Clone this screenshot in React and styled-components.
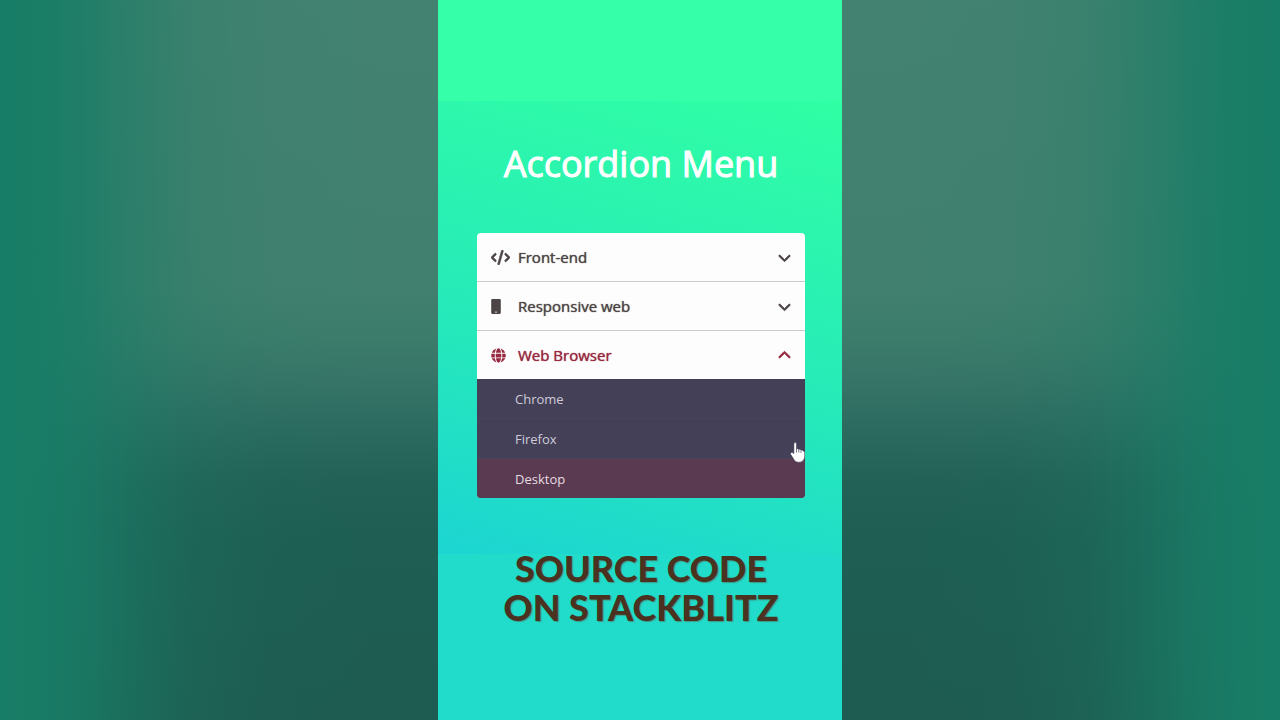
import { useState } from 'react';
import styled, { createGlobalStyle } from 'styled-components';
import { FaGlobe, FaMobile } from 'react-icons/fa';
import { FaChevronDown, FaCode } from 'react-icons/fa6';

const GlobalStyle = createGlobalStyle`
  * {
    box-sizing: border-box;
  }

  body {
    margin: 0;
    font-family: 'Open Sans', 'Noto Sans', sans-serif;
  }
`;

const Page = styled.div`
  min-height: 100vh;
  display: flex;
  justify-content: center;
  background: linear-gradient(
      90deg,
      #187d66 0%,
      rgba(24, 125, 102, 0.96) 3%,
      rgba(24, 125, 102, 0.78) 7%,
      rgba(24, 125, 102, 0.53) 10%,
      rgba(24, 125, 102, 0.22) 15%,
      rgba(24, 125, 102, 0.06) 21%,
      rgba(24, 125, 102, 0) 30%,
      rgba(24, 125, 102, 0) 70%,
      rgba(24, 125, 102, 0.06) 79%,
      rgba(24, 125, 102, 0.22) 85%,
      rgba(24, 125, 102, 0.53) 90%,
      rgba(24, 125, 102, 0.78) 93%,
      rgba(24, 125, 102, 0.96) 97%,
      #187d66 100%
    ),
    linear-gradient(
      #438270 0%,
      #41806e 40%,
      #3c7c6b 47%,
      #367467 53%,
      #2b6a5f 60%,
      #226156 67%,
      #1e5e53 75%,
      #1e5b50 100%
    );
`;

const Screen = styled.main`
  width: 404px;
  max-width: 100%;
  padding: 140px 37px 88px 39px;
  background: linear-gradient(195deg, #30ffa4 0%, #26eab9 55%, #1cd5d2 100%)
      no-repeat 0 101px / 100% 453px,
    linear-gradient(#36ffa9 101px, #22dccb 101px);
`;

const Title = styled.h1`
  margin: 0 0 45px;
  font-size: 36px;
  line-height: 48px;
  font-weight: 400;
  text-align: center;
  color: white;
  -webkit-text-stroke: 1px white;
`;

const Menu = styled.ul`
  margin: 0 0 51px;
  padding: 0;
  list-style: none;
  border-radius: 4px;
  overflow: hidden;
  background: #fdfdfd;
`;

const Item = styled.li`
  & + & {
    border-top: 1px solid #ccc;
  }
`;

const Toggle = styled.button`
  width: 100%;
  height: 48px;
  padding: 0 14px;
  border: 0;
  display: flex;
  align-items: center;
  background: none;
  color: ${({ $open }) => ($open ? '#96283f' : '#4d4545')};
  font: inherit;
  font-size: 15px;
  text-align: left;
  cursor: pointer;
`;

const IconSlot = styled.span`
  width: 27px;
  display: flex;

  svg {
    width: ${({ $width }) => $width}px;
    height: 15px;
    stroke: currentColor;
    stroke-width: ${({ $stroke }) => $stroke};
  }
`;

const Label = styled.span`
  flex: 1;
  text-shadow: 0 0 1px currentColor;
`;

const Chevron = styled(FaChevronDown)`
  font-size: 13px;
  stroke: currentColor;
  stroke-width: 30;
  transform: ${({ $open }) => ($open ? 'rotate(180deg)' : 'none')};
`;

const Submenu = styled.ul`
  margin: 0;
  padding: 0;
  list-style: none;
  background: #444057;
`;

const SubmenuItem = styled.li`
  position: relative;

  & + & {
    border-top: 1px solid #4a435b;
  }
`;

const SubmenuLink = styled.a`
  height: 39px;
  padding-left: 38px;
  display: flex;
  align-items: center;
  background: ${({ $active }) => ($active ? '#5a3a50' : 'none')};
  color: ${({ $active }) => ($active ? '#e6dbe3' : '#cfcbdb')};
  font-size: 13px;
  text-decoration: none;
`;

const Pointer = styled.svg`
  position: absolute;
  right: 0;
  bottom: -5px;
  z-index: 1;
`;

const Caption = styled.p`
  margin: 0;
  font-family: Lato, sans-serif;
  font-size: 36px;
  line-height: 39px;
  font-weight: 900;
  text-align: center;
  text-transform: uppercase;
  white-space: pre-line;
  color: #4a3120;
  text-shadow: 1px 1px 1px rgba(90, 90, 70, 0.5);
`;

const sections = [
  {
    name: 'Front-end',
    icon: FaCode,
    width: 19,
    stroke: 20,
    links: ['Javascript', 'jQuery', 'HTML5'],
  },
  {
    name: 'Responsive web',
    icon: FaMobile,
    width: 10,
    stroke: 16,
    links: ['Tablets', 'Mobile', 'Desktop'],
  },
  {
    name: 'Web Browser',
    icon: FaGlobe,
    width: 15,
    stroke: 0,
    links: ['Chrome', 'Firefox', 'Desktop'],
  },
];

const HandPointer = () => (
  <Pointer width="15" height="21" viewBox="0 0 15 21" aria-hidden="true">
    <path
      d="M5.2.6c.8 0 1.3.5 1.3 1.3v5c.6-.5 1.900-.3 2.200.5.7-.4 1.900-.1 2.200.7.9-.3 1.900 0 2.300.9.900.1 1.500.8 1.500 1.700v3.500c0 3.300-2.100 6-5.400 6H8.200c-1.900 0-3.200-.9-4.100-2.400L.7 12.300c-.7-1.300.5-2.400 1.700-1.700l1.500 1V1.900C3.900 1.100 4.400.6 5.200.6z"
      fill="white"
      stroke="#3b3550"
      strokeWidth="0.5"
    />
    <path
      d="M6.5 7v3.500M8.800 7.500v3M11 8.300v2.500"
      stroke="#3b3550"
      strokeWidth="0.7"
    />
  </Pointer>
);

const Section = ({ section, open, onToggle }) => {
  const Icon = section.icon;
  return (
    <Item>
      <Toggle $open={open} aria-expanded={open} onClick={onToggle}>
        <IconSlot $width={section.width} $stroke={section.stroke}>
          <Icon />
        </IconSlot>
        <Label>{section.name}</Label>
        <Chevron $open={open} />
      </Toggle>
      {open && (
        <Submenu>
          {section.links.map((link, i) => (
            <SubmenuItem key={link}>
              <SubmenuLink href="#" $active={i === 2}>
                {link}
              </SubmenuLink>
              {i === 1 && <HandPointer />}
            </SubmenuItem>
          ))}
        </Submenu>
      )}
    </Item>
  );
};

const App = () => {
  const [current, setCurrent] = useState('Web Browser');

  return (
    <Page>
      <GlobalStyle />
      <Screen>
        <Title>Accordion Menu</Title>
        <Menu>
          {sections.map(section => (
            <Section
              key={section.name}
              section={section}
              open={section.name === current}
              onToggle={() =>
                setCurrent(section.name === current ? null : section.name)
              }
            />
          ))}
        </Menu>
        <Caption>{'Source code\non StackBlitz'}</Caption>
      </Screen>
    </Page>
  );
};

export default App;
